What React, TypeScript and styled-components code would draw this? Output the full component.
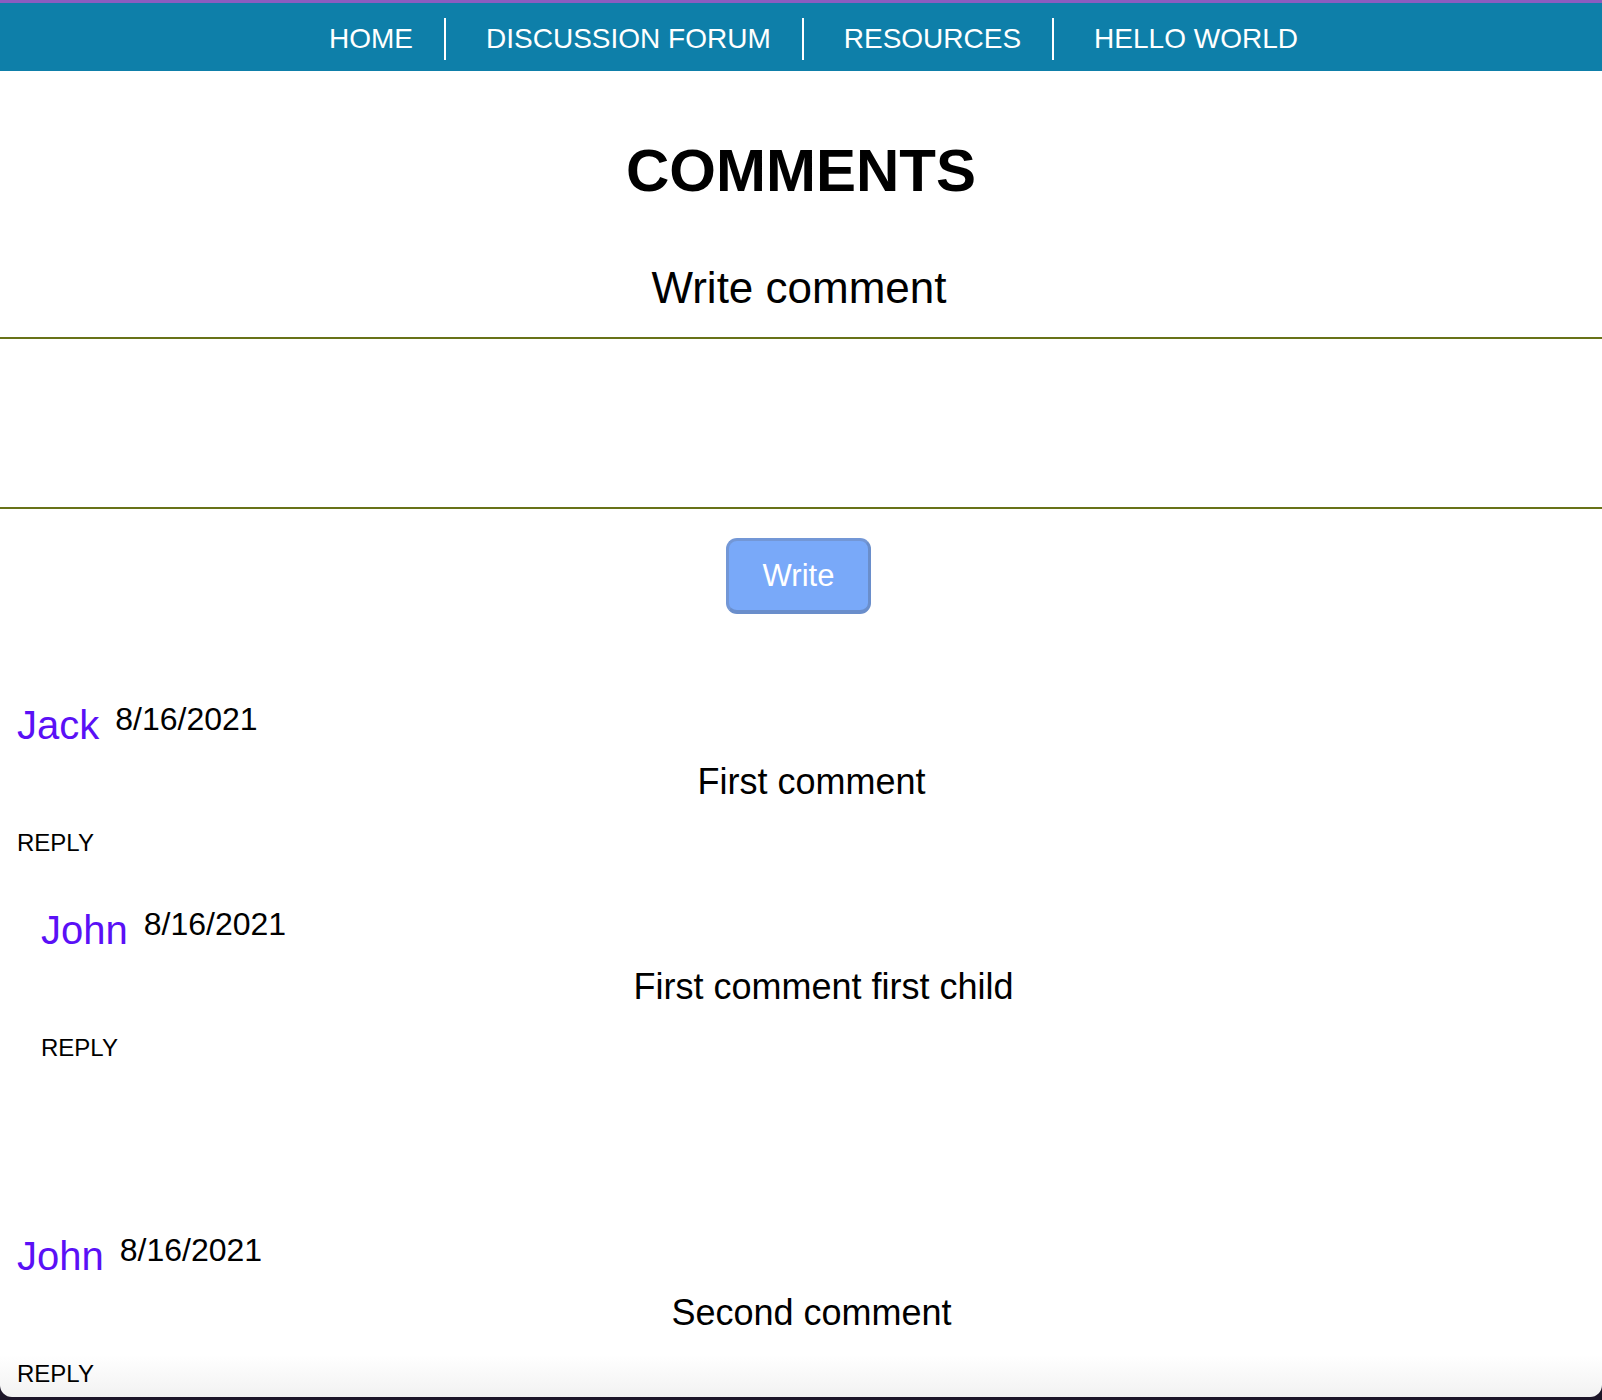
import React from "react";
import styled, { createGlobalStyle } from "styled-components";

const GlobalStyle = createGlobalStyle`
  html, body {
    margin: 0;
    padding: 0;
    background: #1d1629;
  }
  body {
    font-family: "Liberation Sans", Arial, Helvetica, sans-serif;
    color: #000;
  }
  * { box-sizing: border-box; }
`;

const Window = styled.div`
  background: linear-gradient(to bottom, #ffffff 0, #ffffff 1355px, #f2f2f2 1397px);
  min-height: 1397px;
  border-radius: 0 0 12px 12px;
  overflow: hidden;
`;

const NavBar = styled.nav`
  height: 71px;
  background: #0e7fa9;
  border-top: 3px solid #8c5cc0;
  padding: 4px 0 0 16px;
  display: flex;
  justify-content: center;
  align-items: center;
`;

const NavLink = styled.a`
  color: #fff;
  font-size: 28px;
  text-transform: uppercase;
  text-decoration: none;
  padding: 0 31px 0 40px;
  white-space: nowrap;
`;

const NavDivider = styled.span`
  width: 2px;
  height: 42px;
  background: #ffffff;
`;

const Title = styled.h1`
  margin: 66px 0 0;
  font-size: 60px;
  line-height: 68px;
  font-weight: 700;
  text-align: center;
`;

const Subtitle = styled.h2`
  margin: 58px 0 0;
  padding-right: 4px;
  font-size: 44px;
  line-height: 50px;
  font-weight: 400;
  text-align: center;
`;

const CommentInput = styled.textarea`
  display: block;
  width: 100%;
  height: 172px;
  margin: 24px 0 0;
  border: none;
  border-top: 2px solid #687218;
  border-bottom: 2px solid #687218;
  background: transparent;
  resize: none;
  outline: none;
  font-family: inherit;
  font-size: 28px;
`;

const ButtonRow = styled.div`
  display: flex;
  justify-content: center;
  margin-top: 29px;
`;

const WriteButton = styled.button`
  width: 145px;
  height: 76px;
  margin-left: -5px;
  padding-top: 2px;
  background: #79a9f9;
  color: #ffffff;
  font-family: inherit;
  font-size: 31px;
  border: 3px solid #7397d6;
  border-right-color: #6a8ecb;
  border-bottom: 4px solid #6a8ecb;
  border-radius: 11px;
  cursor: pointer;
`;

const CommentList = styled.div<{ $gap: number; $top: number }>`
  display: flex;
  flex-direction: column;
  gap: ${(p) => p.$gap}px;
  margin-top: ${(p) => p.$top}px;
`;

const CommentBlock = styled.div<{ $indent: number }>`
  margin-left: ${(p) => p.$indent}px;
`;

const CommentHeader = styled.div`
  display: flex;
  align-items: flex-start;
  gap: 16px;
`;

const Author = styled.span`
  color: #5a10f6;
  font-size: 40px;
  line-height: 46px;
`;

const DateText = styled.span`
  font-size: 32px;
  line-height: 34px;
`;

const CommentText = styled.p`
  margin: 13px 0 0;
  padding-left: 4px;
  font-size: 36px;
  line-height: 41px;
  text-align: center;
`;

const ReplyButton = styled.button`
  display: block;
  margin: 28px 0 0;
  padding: 0;
  border: none;
  background: none;
  font-family: inherit;
  font-size: 24px;
  line-height: 26px;
  color: #000;
  text-transform: uppercase;
  cursor: pointer;
`;

type Comment = {
  id: number;
  author: string;
  date: string;
  text: string;
  children: Comment[];
};

const comments: Comment[] = [
  {
    id: 1,
    author: "Jack",
    date: "8/16/2021",
    text: "First comment",
    children: [
      {
        id: 2,
        author: "John",
        date: "8/16/2021",
        text: "First comment first child",
        children: [],
      },
    ],
  },
  {
    id: 3,
    author: "John",
    date: "8/16/2021",
    text: "Second comment",
    children: [],
  },
];

const CommentItem: React.FC<{ comment: Comment; indent: number }> = ({ comment, indent }) => (
  <CommentBlock $indent={indent}>
    <CommentHeader>
      <Author>{comment.author}</Author>
      <DateText>{comment.date}</DateText>
    </CommentHeader>
    <CommentText>{comment.text}</CommentText>
    <ReplyButton>Reply</ReplyButton>
    {comment.children.length > 0 && (
      <CommentList $gap={51} $top={51}>
        {comment.children.map((c) => (
          <CommentItem key={c.id} comment={c} indent={24} />
        ))}
      </CommentList>
    )}
  </CommentBlock>
);

const navItems = ["Home", "Discussion forum", "Resources", "Hello world"];

export default function App() {
  return (
    <Window>
      <GlobalStyle />
      <NavBar>
        {navItems.map((item, i) => (
          <React.Fragment key={item}>
            {i > 0 && <NavDivider />}
            <NavLink href="#">{item}</NavLink>
          </React.Fragment>
        ))}
      </NavBar>
      <Title>COMMENTS</Title>
      <Subtitle>Write comment</Subtitle>
      <CommentInput aria-label="Write comment" />
      <ButtonRow>
        <WriteButton>Write</WriteButton>
      </ButtonRow>
      <CommentList $gap={172} $top={88}>
        {comments.map((c) => (
          <CommentItem key={c.id} comment={c} indent={17} />
        ))}
      </CommentList>
    </Window>
  );
}
